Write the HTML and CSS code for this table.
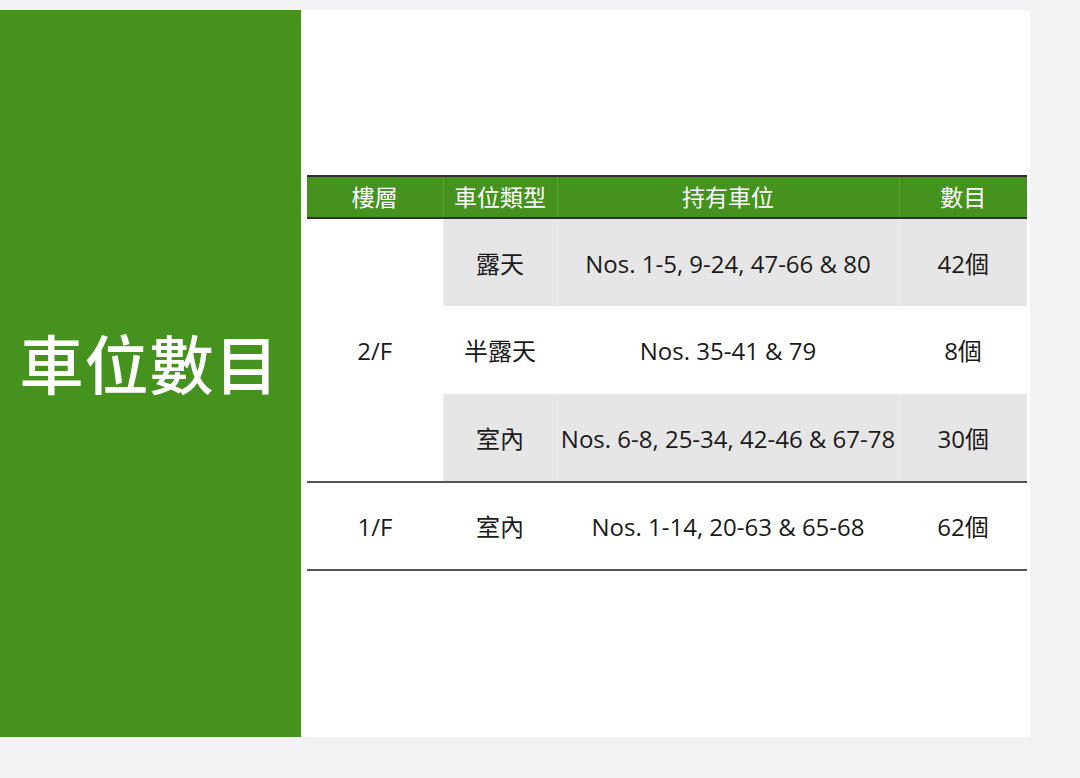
FILE: index.html
```html
<!DOCTYPE html>
<html lang="zh-Hant">
<head>
<meta charset="utf-8">
<link rel="stylesheet" href="styles.css">
</head>
<body>
<div class="slide">
  <div class="side"><h1 class="title">車位數目</h1></div>
  <div class="main">
    <table class="tbl">
      <colgroup>
        <col class="c1"><col class="c2"><col class="c3"><col class="c4">
      </colgroup>
      <thead>
        <tr><th>樓層</th><th>車位類型</th><th>持有車位</th><th>數目</th></tr>
      </thead>
      <tbody>
        <tr class="gray"><td rowspan="3" class="floor">2/F</td><td>露天</td><td>Nos. 1-5, 9-24, 47-66 &amp; 80</td><td>42個</td></tr>
        <tr><td>半露天</td><td>Nos. 35-41 &amp; 79</td><td>8個</td></tr>
        <tr class="gray last"><td>室內</td><td>Nos. 6-8, 25-34, 42-46 &amp; 67-78</td><td>30個</td></tr>
        <tr class="final"><td class="floor">1/F</td><td>室內</td><td>Nos. 1-14, 20-63 &amp; 65-68</td><td>62個</td></tr>
      </tbody>
    </table>
  </div>
</div>
</body>
</html>
```
FILE: styles.css
```css
html, body {
  margin: 0;
  padding: 0;
  background: #f2f2f4;
}
body {
  width: 1080px;
  height: 778px;
  padding-top: 10px;
  box-sizing: border-box;
  font-family: "Open Sans", "Noto Sans CJK TC", sans-serif;
}
.slide {
  display: flex;
  width: 1030px;
  height: 727px;
  background: #fff;
}
.side {
  width: 301px;
  flex: none;
  background: #46921f;
  display: flex;
  align-items: center;
  justify-content: center;
}
.title {
  margin: 0 2px 26px 0;
  color: #fff;
  font-family: "Noto Sans CJK TC", sans-serif;
  font-weight: 500;
  font-size: 64px;
  letter-spacing: 1px;
  line-height: 1;
}
.main {
  flex: 1;
  padding: 165px 0 0 6px;
}
.tbl {
  width: 720px;
  border-collapse: collapse;
  table-layout: fixed;
}
.c1 { width: 136px; }
.c2 { width: 114px; }
.c3 { width: 342px; }
.c4 { width: 128px; }
.tbl th {
  height: 38px;
  padding: 0 0 2px 0;
  background: #46921f;
  color: #fff;
  font-family: "Noto Sans CJK TC", sans-serif;
  font-weight: 400;
  font-size: 23px;
  border-top: 2px solid #2f2f2f;
  border-bottom: 2px solid #2f2f2f;
  border-left: 1px solid #5da63a;
  line-height: 1;
}
.tbl th:first-child { border-left: none; }
.tbl td {
  height: 88px;
  padding: 2px 0 0 0;
  text-align: center;
  color: #1a1a1a;
  font-size: 24px;
  font-family: "Open Sans", "Noto Sans CJK TC", sans-serif;
  line-height: 1;
  white-space: nowrap;
  box-sizing: border-box;
}
.tbl tr.gray td { background: #e6e6e6; border-left: 1px solid #ececec; }
.tbl tr.gray td.floor { background: #fff; border-left: none; }
.tbl tr.last td, .tbl td.floor[rowspan] { border-bottom: 2px solid #555; }
.tbl tr.final td { border-bottom: 2px solid #555; }
```
